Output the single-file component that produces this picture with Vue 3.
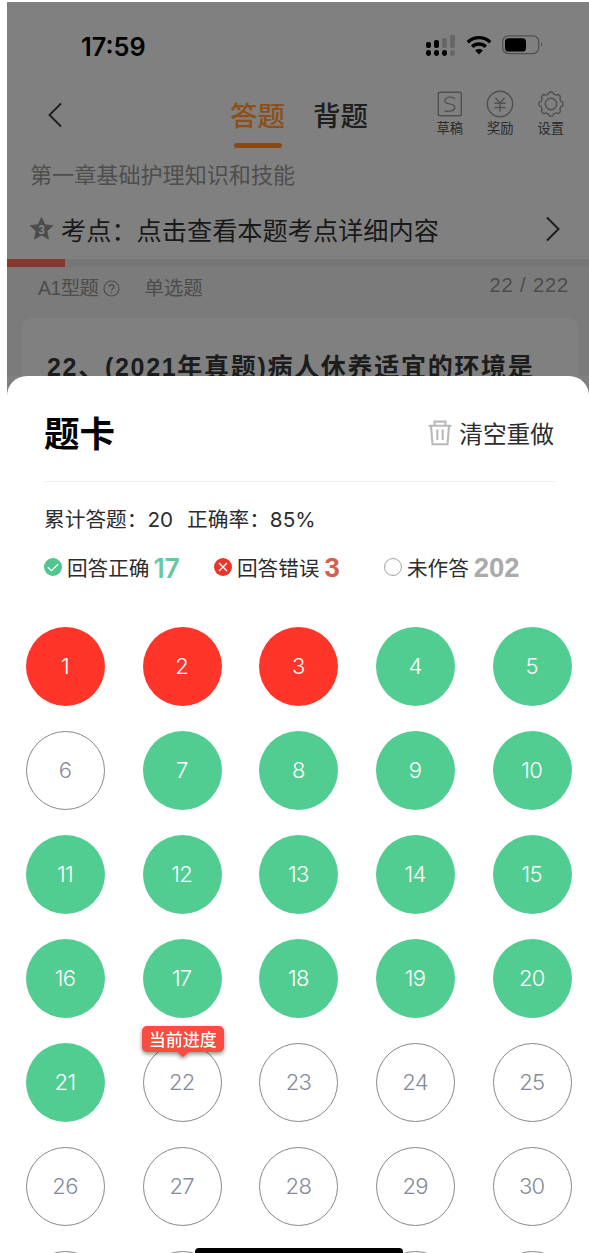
<template>
  <div class="phone">
    <header class="status-bar">
      <span class="clock">17:59</span>
      <svg class="signal" width="30" height="22" viewBox="0 0 30 22">
        <g fill="#000">
          <rect x="0" y="7" width="5" height="6" rx="2" />
          <rect x="8" y="5" width="5" height="8" rx="2" />
          <rect x="0" y="15" width="5" height="6" rx="2.4" />
          <rect x="8" y="15" width="5" height="6" rx="2.4" />
          <rect x="16" y="15" width="5" height="6" rx="2.4" />
        </g>
        <g fill="#666">
          <rect x="16" y="3" width="5" height="10" rx="2" />
          <rect x="24" y="0" width="5" height="13" rx="2" />
          <rect x="24" y="15" width="5" height="6" rx="2.4" />
        </g>
      </svg>
      <svg class="wifi" width="26" height="20" viewBox="0 0 26 20">
        <g fill="none" stroke="#000" stroke-width="3.4">
          <path d="M1.8 7.2a16 16 0 0 1 22.4 0" />
          <path d="M6.2 11.8a9.8 9.8 0 0 1 13.6 0" />
        </g>
        <path d="M13 19.4l-3.8-4a5.6 5.6 0 0 1 7.6 0z" fill="#000" />
      </svg>
      <svg class="battery" width="41" height="20" viewBox="0 0 41 20">
        <rect x="0.7" y="0.9" width="36" height="17.8" rx="5.6" fill="none" stroke="#505050" stroke-width="1.3" />
        <rect x="3" y="3.3" width="21" height="13.2" rx="3.6" fill="#000" />
        <path d="M39 7.6c1.4.8 1.4 3.6 0 4.4z" fill="#505050" />
      </svg>
    </header>

    <nav class="nav">
      <svg class="back" width="16" height="26" viewBox="0 0 16 26">
        <path d="M14 1.5L2.5 13 14 24.5" fill="none" stroke="#1e1e1e" stroke-width="1.9" />
      </svg>
      <div class="tabs">
        <span v-for="tab in tabs" :key="tab" :class="['tab', { active: tab === activeTab }]">{{ tab }}</span>
      </div>
      <div class="tools">
        <div class="tool">
          <svg width="28" height="28" viewBox="0 0 28 28">
            <rect x="2.3" y="2.3" width="23" height="23.4" rx="1.8" />
            <path d="M19 9.2C17.5 6 9 6.4 9 11c0 4 9.800 1.600 9.800 6.200 0 3.600-5.800 5.200-10.300 3.400" />
          </svg>
          <span>草稿</span>
        </div>
        <div class="tool">
          <svg width="28" height="28" viewBox="0 0 28 28">
            <circle cx="14" cy="14" r="12.7" />
            <path d="M9.3 7.8L14 13l4.7-5.2M14 13v8.5M8.5 13.2h11M8.5 17.5h11" />
          </svg>
          <span>奖励</span>
        </div>
        <div class="tool">
          <svg width="28" height="28" viewBox="0 0 28 28">
            <path :d="gearPath" stroke-linejoin="round" />
            <circle cx="14" cy="14" r="5.7" />
          </svg>
          <span>设置</span>
        </div>
      </div>
    </nav>

    <div class="chapter">第一章基础护理知识和技能</div>

    <div class="point">
      <svg class="star" width="23" height="23" viewBox="0 0 23 23">
        <path d="M11.5 .6l3.3 7.2 7.9.9-5.9 5.3 1.6 7.9-6.9-3.9-6.9 3.9 1.6-7.9L.3 8.700l7.900-.9z" fill="#4c4c4c" stroke="#4c4c4c" stroke-linejoin="round" />
        <text x="11.5" y="16.600" text-anchor="middle">3</text>
      </svg>
      <span class="point-text">考点：点击查看本题考点详细内容</span>
      <svg class="more" width="16" height="26" viewBox="0 0 16 26">
        <path d="M2 1.5L13.5 13 2 24.5" fill="none" stroke="#1e1e1e" stroke-width="2" />
      </svg>
    </div>

    <div class="progress"><div class="progress-fill" :style="{ width: progress + '%' }"></div></div>

    <main class="question-area">
      <div class="kind">
        <span>A1型题</span>
        <svg class="help" width="17" height="17" viewBox="0 0 17 17">
          <circle cx="8.5" cy="8.5" r="7.5" fill="none" stroke="#4c4c4c" stroke-width="1.1" />
          <path d="M6.2 6.900c0-3 4.700-3 4.700-.2 0 1.700-2.300 1.800-2.300 3.600M8.600 11.700v1.400" fill="none" stroke="#4c4c4c" stroke-width="1.3" />
        </svg>
        <span class="single">单选题</span>
        <span class="counter">{{ current }} / {{ total }}</span>
      </div>
      <div class="question">22、(2021年真题)病人休养适宜的环境是</div>
    </main>

    <section class="sheet">
      <div class="sheet-head">
        <h2>题卡</h2>
        <button class="reset">
          <svg width="24" height="26" viewBox="0 0 24 26" fill="none" stroke="#b9b9b9" stroke-width="2.1">
            <path d="M.5 5.700h23M6.500 5.500V1.600h11v3.900M3 6l1.500 18.200h15L21 6M9.300 9.500v10.500M14.700 9.500v10.500" />
          </svg>
          <span>清空重做</span>
        </button>
      </div>

      <div class="summary">
        <span>累计答题：20</span>
        <span>正确率：85%</span>
      </div>

      <div class="legend">
        <div class="legend-item right">
          <svg width="18" height="18" viewBox="0 0 18 18">
            <circle cx="9" cy="9" r="9" fill="#50c58f" />
            <path d="M3.8 9.200l3.700 3.500 6.800-6.700" fill="none" stroke="#fff" stroke-width="1.3" />
          </svg>
          <span>回答正确</span><b>17</b>
        </div>
        <div class="legend-item wrong">
          <svg width="18" height="18" viewBox="0 0 18 18">
            <circle cx="9" cy="9" r="9" fill="#ea3528" />
            <path d="M5 5l8 8M13 5l-8 8" fill="none" stroke="#fff" stroke-width="1.3" />
          </svg>
          <span>回答错误</span><b>3</b>
        </div>
        <div class="legend-item blank">
          <svg width="18" height="18" viewBox="0 0 18 18">
            <circle cx="9" cy="9" r="8.5" fill="#fff" stroke="#999" stroke-width="0.9" />
          </svg>
          <span>未作答</span><b>202</b>
        </div>
      </div>

      <div class="grid">
        <div v-for="n in 35" :key="n" :class="['cell', stateOf(n)]">
          {{ n }}
          <div v-if="n === current" class="here">当前进度</div>
        </div>
      </div>
    </section>

    <div class="home-bar"></div>
  </div>
</template>

<script setup>
const tabs = ['答题', '背题']
const activeTab = '答题'
const current = 22
const total = 222
const progress = current / total * 100

const wrong = [1, 2, 3]
const skipped = [6]

function stateOf(n) {
  if (wrong.includes(n)) return 'wrong'
  if (n >= current || skipped.includes(n)) return 'blank'
  return 'right'
}

// eight rounded teeth around the centre of a 28px box
function gear() {
  const pts = []
  for (let i = 0; i <= 96; i++) {
    const a = i / 96 * Math.PI * 2
    const r = 11.1 + 1 * Math.tanh(2.4 * Math.cos(a * 8))
    pts.push((14 + r * Math.cos(a)).toFixed(2) + ' ' + (14 + r * Math.sin(a)).toFixed(2))
  }
  return 'M' + pts.join('L') + 'z'
}
const gearPath = gear()
</script>

<style>
body { margin: 0; background: #fff; }
</style>

<style scoped>
.phone {
  position: relative; box-sizing: border-box;
  width: 582px; height: 1251px; margin: 2px 0 0 7px;
  display: flex; flex-direction: column; overflow: hidden;
  background: #808080; color: #1e1e1e;
  font-family: "Liberation Sans", "Noto Sans CJK SC", sans-serif;
  white-space: nowrap;
}
.phone > * { flex-shrink: 0; }

.status-bar { height: 84px; display: flex; align-items: center; padding-left: 74px; box-sizing: border-box; }
.clock { width: 345px; font: 600 25.3px/30px Inter, sans-serif; color: #000; margin-top: 5px; }
.signal { margin: 3px 0 0 0; }
.wifi { margin: 2px 0 0 10px; }
.battery { margin: 2px 0 0 10px; }

.nav { height: 66px; display: flex; align-items: flex-start; }
.back { margin: 16px 0 0 40px; }
.tabs { display: flex; gap: 28px; margin-left: 167px; }
.tab {
  position: relative; width: 55px; height: 62px;
  font: 500 27.5px/56px "Noto Sans CJK SC", sans-serif;
}
.tab.active { color: #8d4f17; }
.tab.active::after {
  content: ''; position: absolute; left: 4px; bottom: 0;
  width: 48px; height: 5px; border-radius: 3px; background: #884a12;
}
.tools { display: flex; margin-left: 56.5px; padding-top: 4px; }
.tool {
  width: 50.5px; display: flex; flex-direction: column; align-items: center;
  font: 400 13.3px/20px "Noto Sans CJK SC", sans-serif; color: #2b2b2b;
}
.tool svg { fill: none; stroke: #505050; stroke-width: 1.4; }

.chapter { height: 42px; padding-left: 23px; font: 400 22.1px/42px "Noto Sans CJK SC", sans-serif; color: #4e4e4e; }

.point { height: 65px; display: flex; align-items: center; padding: 4px 0 0 23px; box-sizing: border-box; }
.star text { font: 700 12px "Liberation Sans", sans-serif; fill: #858585; }
.point-text { width: 484px; margin-left: 8px; font: 400 25.2px/60px "Noto Sans CJK SC", sans-serif; color: #191919; }

.progress { height: 8px; background: #777; }
.progress-fill { height: 8px; background: #85382d; }

.question-area { height: 109px; background: #7b7b7b; overflow: hidden; }
.kind {
  height: 51px; display: flex; align-items: center; padding: 0 20px 0 31px;
  font: 400 19.4px/41px "Liberation Sans", "Noto Sans CJK SC", sans-serif; color: #4c4c4c;
}
.kind > * { margin-bottom: 8px; }
.kind > span:first-child { letter-spacing: -0.5px; }
.kind .help { margin-left: 4px; }
.kind .single { margin-left: 25px; }
.kind .counter { margin-left: auto; margin-bottom: 15px; font-size: 20px; letter-spacing: 0.9px; }
.question {
  height: 80px; margin: 0 11px 0 15px; padding-left: 25px; border-radius: 10px; background: #808080;
  font: 700 25px/98px "Liberation Sans", "Noto Sans CJK SC", sans-serif; letter-spacing: 1.7px; color: #1c1c1c;
}

.sheet {
  height: 877px; background: #fff; border-radius: 20px 20px 0 0; overflow: hidden; color: #2c2c2c;
}
.sheet-head {
  height: 105px; margin: 0 34px 0 37px; border-bottom: 1px solid #efefef;
  display: flex; align-items: center; justify-content: space-between;
}
h2 { margin: 7px 0 0; font: 700 35.5px/50px "Noto Sans CJK SC", sans-serif; color: #000; }
.reset {
  display: flex; align-items: center; gap: 7px; padding: 0; margin: 9px 1px 0 0; border: 0; background: none;
  font: 400 23.7px/34px "Noto Sans CJK SC", sans-serif; color: #2c2c2c;
}

.summary {
  height: 74px; display: flex; gap: 14px; padding-left: 37px;
  font: 400 20.7px/76px Inter, "Noto Sans CJK SC", sans-serif;
}
.legend {
  height: 22px; display: flex; align-items: center; padding-left: 37px;
  font: 400 20.6px/22px "Noto Sans CJK SC", sans-serif;
}
.legend-item { width: 170px; display: flex; align-items: center; }
.legend-item span { margin-left: 5px; }
.legend-item b { margin: 2px 0 0 5px; font: 700 27.5px/22px "Liberation Sans", sans-serif; }
.legend-item.right b { margin-left: 4px; font: 600 26.5px/22px Inter, sans-serif; color: #69c7a0; }
.legend-item.wrong b { color: #d3604f; }
.legend-item.blank b { color: #aaa; }

.grid {
  display: grid; grid-template-columns: repeat(5, 79px); column-gap: 37.7px;
  grid-auto-rows: 79px; row-gap: 25px; padding: 49px 0 0 19px;
}
.cell {
  position: relative; box-sizing: border-box; border-radius: 50%; padding: 0 1px 2px 0;
  display: flex; align-items: center; justify-content: center;
  font: 300 22px/28px Inter, sans-serif; letter-spacing: -0.7px; color: #fff;
}
.cell.right { background: #52cd92; }
.cell.wrong { background: #ff3529; }
.cell.blank { border: 1.5px solid #888; color: #858a9c; }
.here {
  position: absolute; left: -2px; top: -18px; width: 82px; height: 26px; border-radius: 5px;
  background: #f84d40; color: #fff; text-align: center;
  font: 500 17px/26px "Noto Sans CJK SC", sans-serif; letter-spacing: 0;
  filter: drop-shadow(0 2px 2px rgba(0, 0, 0, 0.45));
}
.here::after {
  content: ''; position: absolute; left: 34px; top: 25px;
  border: 7px solid transparent; border-top: 6px solid #f84d40; border-bottom: 0;
}
.home-bar {
  position: absolute; left: 188px; bottom: 0; width: 208px; height: 5px;
  border-radius: 4px 4px 0 0; background: #000;
}
</style>
